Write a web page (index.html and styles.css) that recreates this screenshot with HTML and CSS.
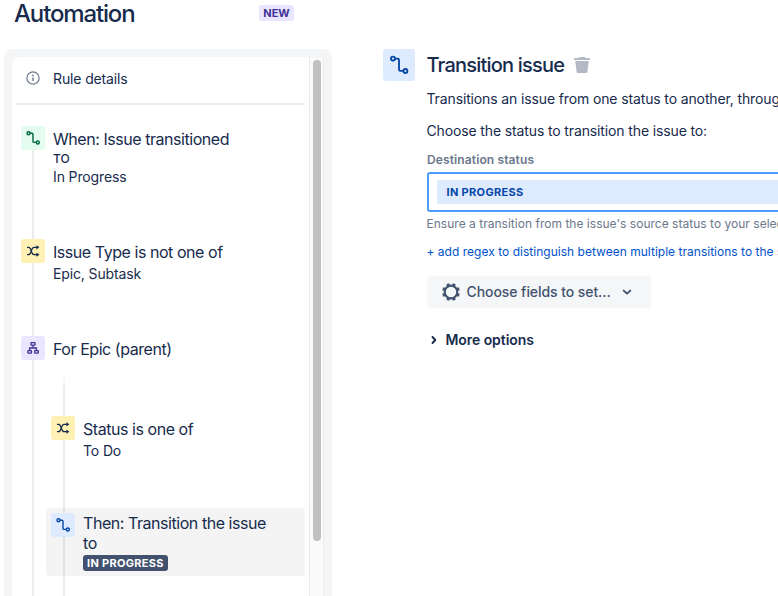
FILE: index.html
```html
<!DOCTYPE html>
<html lang="en">
<head>
  <meta charset="UTF-8" />
  <meta name="viewport" content="width=device-width, initial-scale=1.0"/>
  <title>Automation</title>
  <link rel="stylesheet" href="styles.css">
</head>
<body>
  <!-- Shared icons -->
  <svg class="sprite">
    <symbol id="icon-transition" viewBox="0 0 24 24">
      <g fill="none" stroke="currentColor" stroke-width="1.4">
        <circle cx="7.5" cy="7.2" r="1.5"/>
        <path d="M9 7.2h2c.7 0 1 .3 1 1v7.2c0 .7.3 1 1 1H15"/>
        <circle cx="16.8" cy="16.5" r="1.5"/>
      </g>
    </symbol>
    <symbol id="icon-shuffle" viewBox="0 0 24 24">
      <g fill="none" stroke="currentColor" stroke-width="1.2">
        <path d="M6 8.3h1.6c3.4 0 2 7.4 5.4 7.4h3.3"/>
        <path d="M6 15.7h1.6c3.4 0 2-7.4 5.4-7.4h3.3"/>
      </g>
      <path fill="currentColor" d="M15.4 6.2l3 2.1-3 2.1zM15.4 13.6l3 2.1-3 2.1z"/>
    </symbol>
    <symbol id="icon-branch" viewBox="0 0 24 24">
      <g fill="none" stroke="currentColor" stroke-width="1.3">
        <rect x="10" y="6.7" width="4" height="2.5" rx=".4"/>
        <rect x="6.9" y="14.7" width="3.6" height="2.5" rx=".4"/>
        <rect x="13.7" y="14.7" width="3.6" height="2.5" rx=".4"/>
        <path d="M12 9.2V12M8.6 14.7V12h6.8v2.7"/>
      </g>
    </symbol>
  </svg>

  <aside class="sidebar">
    <header class="header">
      <h1>Automation</h1>
      <span class="new-badge">NEW</span>
    </header>

    <div class="panel">
      <div class="rules">
        <div class="rule-details">
          <svg class="info-icon" viewBox="0 0 16 16">
            <circle cx="8" cy="8" r="6.1" fill="none" stroke="currentColor" stroke-width="1.2"/>
            <rect x="7.3" y="7.2" width="1.4" height="3.8" rx=".6" fill="currentColor"/>
            <circle cx="8" cy="5.4" r=".85" fill="currentColor"/>
          </svg>
          <span>Rule details</span>
        </div>

        <div class="chain">
          <div class="step step-trigger">
            <svg class="icon green"><use href="#icon-transition"/></svg>
            <div class="text">
              <h4>When: Issue transitioned</h4>
              <p class="to">TO</p>
              <p>In Progress</p>
            </div>
          </div>
          <div class="step step-type">
            <svg class="icon yellow"><use href="#icon-shuffle"/></svg>
            <div class="text">
              <h4>Issue Type is not one of</h4>
              <p>Epic, Subtask</p>
            </div>
          </div>
          <div class="step step-epic">
            <svg class="icon purple"><use href="#icon-branch"/></svg>
            <div class="text">
              <h4>For Epic (parent)</h4>
            </div>
          </div>

          <div class="branch">
            <div class="step step-status">
              <svg class="icon yellow"><use href="#icon-shuffle"/></svg>
              <div class="text">
                <h4>Status is one of</h4>
                <p>To Do</p>
              </div>
            </div>
            <div class="step selected">
              <svg class="icon blue"><use href="#icon-transition"/></svg>
              <div class="text">
                <h4>Then: Transition the issue to</h4>
                <span class="lozenge">IN PROGRESS</span>
              </div>
            </div>
          </div>
        </div>
      </div>
      <div class="scrollbar"><div class="thumb"></div></div>
    </div>
  </aside>

  <main class="content">
    <svg class="main-icon blue"><use href="#icon-transition"/></svg>
    <div class="form">
      <div class="form-title">
        <h2>Transition issue</h2>
        <svg class="trash" viewBox="0 0 16 16">
          <path d="M5 0h6v1h4.2c.5 0 .8.3.8.8V3H0V1.8C0 1.3.3 1 .8 1H5zM1.2 4h13.6l-1.5 11.2c-.1.5-.4.8-.9.8H3.6c-.5 0-.8-.3-.9-.8z" fill="currentColor"/>
        </svg>
      </div>
      <p class="desc">Transitions an issue from one status to another, through</p>
      <p class="desc choose">Choose the status to transition the issue to:</p>
      <label class="label">Destination status</label>
      <div class="select"><span>IN PROGRESS</span></div>
      <p class="help">Ensure a transition from the issue's source status to your selected</p>
      <a class="regex">+ add regex to distinguish between multiple transitions to the same</a>
      <button class="fields-btn">
        <svg class="gear" viewBox="0 0 18 18">
          <circle cx="9" cy="9" r="6.3" fill="none" stroke="currentColor" stroke-width="2.2"/>
          <circle cx="9" cy="9" r="7.7" fill="none" stroke="currentColor" stroke-width="2.4" pathLength="80" stroke-dasharray="5 5" stroke-dashoffset="-2.5"/>
        </svg>
        <span>Choose fields to set...</span>
        <svg class="chevron" viewBox="0 0 10 10">
          <path d="M1.7 3.6L5 6.6l3.3-3" fill="none" stroke="currentColor" stroke-width="1.9" stroke-linecap="round" stroke-linejoin="round"/>
        </svg>
      </button>
      <div class="more">
        <svg class="more-icon" viewBox="0 0 10 10">
          <path d="M3.5 2L6.3 5l-2.8 3" fill="none" stroke="currentColor" stroke-width="1.9" stroke-linecap="round" stroke-linejoin="round"/>
        </svg>
        <span>More options</span>
      </div>
    </div>
  </main>
</body>
</html>
```
FILE: styles.css
```css
* {
  margin: 0;
  padding: 0;
  box-sizing: border-box;
}

html, body {
  height: 100%;
  overflow: hidden;
}

body {
  display: flex;
  font-family: Inter, sans-serif;
  font-size: 14px;
  line-height: 20px;
  letter-spacing: -0.13px;
  color: #172b4d;
  background: #fff;
  white-space: nowrap;
}

.sprite {
  display: none;
}

.sidebar {
  width: 332px;
  height: 596px;
  padding-left: 4px;
  flex-shrink: 0;
  display: flex;
  flex-direction: column;
}

.header {
  height: 49px;
  padding-left: 10px;
  display: flex;
  justify-content: space-between;
  align-items: flex-start;
}

h1 {
  font-size: 24px;
  line-height: 28px;
  font-weight: 500;
  letter-spacing: -1.15px;
}

.new-badge {
  width: 35px;
  height: 16px;
  margin: 5px 38px 0 0;
  border-radius: 3px;
  background: #eae6ff;
  color: #403294;
  font-size: 11px;
  line-height: 16px;
  font-weight: 700;
  letter-spacing: 0;
  text-align: center;
}

.panel {
  flex: 1;
  display: flex;
  padding: 8px 8px 0;
  background: #f4f5f7;
  border-radius: 8px 8px 0 0;
  overflow: hidden;
}

.rules {
  width: 297px;
  height: 539px;
  overflow: hidden;
  background: #fff;
  border-radius: 8px 0 0 0;
  padding: 0 4px;
}

.rule-details {
  height: 48px;
  padding: 0 0 2px 9px;
  display: flex;
  align-items: center;
  gap: 12px;
  border-bottom: 2px solid #ebecf0;
}

.info-icon {
  width: 16px;
  height: 16px;
  color: #6b778c;
  margin-top: -2px;
}

.scrollbar {
  width: 15px;
  height: 539px;
  padding: 3px 0 0 3px;
  background: #fafafa;
  border-left: 1px solid #e8e8e8;
  border-right: 1px solid #ededed;
}

.thumb {
  width: 8px;
  height: 481px;
  border-radius: 4px;
  background: #c1c1c1;
}

/* Rule chain, the connector line is drawn as a background */
.chain {
  padding-top: 21px;
  height: 491px;
  background: linear-gradient(#ebecf0, #ebecf0) 16px 40px / 2px 100% no-repeat;
}

.step {
  display: flex;
  align-items: flex-start;
  gap: 8px;
  padding-left: 5px;
}

.step-trigger {
  height: 113px;
}

.step-type {
  height: 97px;
}

.step-epic {
  height: 36px;
}

.icon {
  width: 24px;
  height: 24px;
  border-radius: 3px;
  flex-shrink: 0;
}

.green { background: #e3fcef; color: #006644; }
.yellow { background: #fff0b3; color: #172b4d; }
.purple { background: #eae6ff; color: #403294; }
.blue { background: #deebff; color: #0747a6; }

.text {
  padding-top: 3px;
}

.text h4 {
  font-size: 16px;
  font-weight: 400;
  line-height: 20px;
  letter-spacing: -0.45px;
}

.text p {
  line-height: 18px;
  padding-top: 3px;
}

.text p.to {
  font-size: 12px;
  line-height: 20px;
  font-weight: 500;
  letter-spacing: 0;
  padding: 0;
}

.text p.to + p {
  padding: 0;
  line-height: 16px;
}

.branch {
  margin-left: 30px;
  height: 224px;
  padding-top: 44px;
  background: linear-gradient(rgba(235, 236, 240, 0), #ebecf0 18px) 17px 0 / 2px 100% no-repeat;
}

.step-status {
  height: 92px;
}

.selected {
  height: 68px;
  padding: 5px 30px 0 5px;
  border-radius: 4px;
  background: rgba(9, 9, 9, 0.045);
}

.selected .text {
  padding-top: 0;
  white-space: normal;
}

.lozenge {
  display: block;
  width: 85px;
  height: 16px;
  margin-top: 2px;
  padding-left: 4px;
  border-radius: 3px;
  background: #42526e;
  color: #fff;
  font-size: 11px;
  line-height: 16px;
  font-weight: 700;
  letter-spacing: 0.3px;
  white-space: nowrap;
}

.content {
  display: flex;
  align-items: flex-start;
  gap: 12px;
  padding: 49px 0 0 51px;
  flex: 1;
  min-width: 0;
  overflow: hidden;
}

.main-icon {
  width: 32px;
  height: 32px;
  border-radius: 3px;
  flex-shrink: 0;
}

.form {
  width: 500px;
  flex-shrink: 0;
  display: flex;
  flex-direction: column;
  align-items: flex-start;
}

.form-title {
  display: flex;
  align-items: center;
  gap: 10px;
  height: 32px;
  margin-left: -0.5px;
}

h2 {
  font-size: 20px;
  font-weight: 500;
  letter-spacing: -0.8px;
}

.trash {
  width: 16px;
  height: 16px;
  color: #b3bac5;
}

.desc {
  margin: 8px 0 0 -0.5px;
}

.choose {
  margin-top: 12px;
}

.label {
  margin-top: 11px;
  font-size: 12px;
  line-height: 16px;
  font-weight: 600;
  letter-spacing: 0.12px;
  color: #6b778c;
}

.select {
  width: 500px;
  height: 40px;
  margin-top: 4px;
  padding: 6px 8px;
  border: 2px solid #4c9aff;
  border-radius: 3px;
}

.select span {
  display: block;
  height: 24px;
  padding-left: 9.5px;
  background: #deebff;
  color: #0747a6;
  font-size: 11px;
  line-height: 24px;
  font-weight: 700;
  letter-spacing: 0.33px;
}

.help {
  margin: 4px 0 0 -0.5px;
  font-size: 12px;
  line-height: 16px;
  color: #6b778c;
}

.regex {
  margin: 12px 0 0 -0.5px;
  font-size: 12px;
  line-height: 16px;
  color: #0052cc;
}

.help,
.regex {
  letter-spacing: 0.02px;
}

.fields-btn {
  width: 224px;
  height: 32px;
  margin-top: 16px;
  padding-left: 15px;
  display: flex;
  align-items: center;
  border: none;
  border-radius: 3px;
  background: #f5f6f8;
  color: #42526e;
  font: 500 14px/20px Inter, sans-serif;
  letter-spacing: -0.07px;
}

.gear {
  width: 18px;
  height: 18px;
  margin-right: 6.5px;
}

.chevron {
  width: 10px;
  height: 10px;
  margin-left: 11px;
}

.more {
  margin: 22px 0 0 2px;
  display: flex;
  align-items: center;
  gap: 6.5px;
  font-weight: 600;
  letter-spacing: -0.07px;
}

.more-icon {
  width: 10px;
  height: 10px;
}
```
